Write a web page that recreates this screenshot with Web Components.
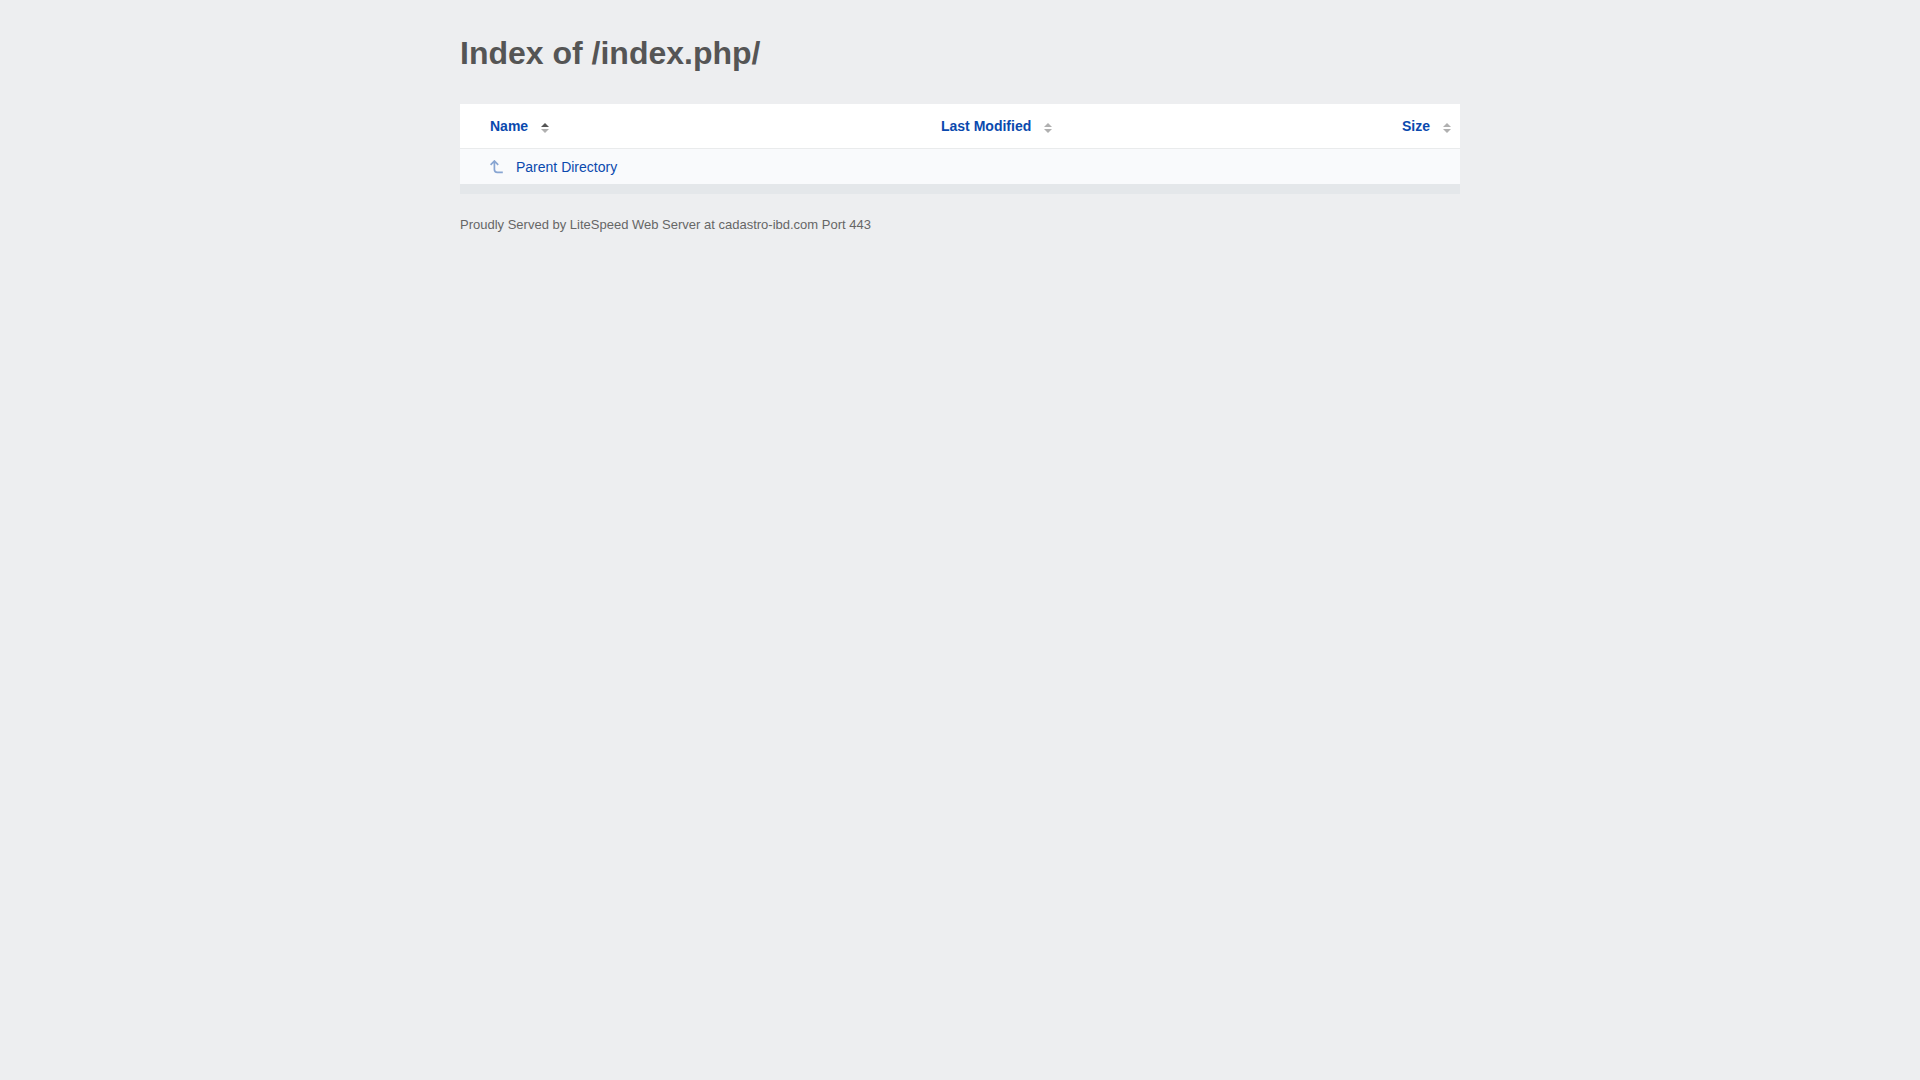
<!DOCTYPE html>
<html lang="en">
<head>
<meta charset="utf-8">
<meta name="viewport" content="width=device-width, initial-scale=1">
<title>Index of /index.php/</title>
<style>
    body {
        margin: 0;
        background-color: #edeef0;
        color: #555;
        font-family: "Liberation Sans", Arial, sans-serif;
        font-size: 14px;
        line-height: 20px;
    }
</style>
</head>
<body>
<index-page>
    <span slot="title">Index of /index.php/</span>
    <directory-listing></directory-listing>
    <span slot="footer">Proudly Served by LiteSpeed Web Server at cadastro-ibd.com Port 443</span>
</index-page>

<template id="page-template">
<style>
    :host {
        display: block;
        max-width: 1000px;
        margin: 0 auto;
        padding: 33px 20px;
    }

    h1 {
        margin: 0 0 31px;
        font-size: 32px;
        line-height: 40px;
    }

    footer {
        margin-top: 21px;
        color: #666;
        font-size: 13px;
    }
</style>
<main>
    <h1><slot name="title"></slot></h1>
    <slot></slot>
</main>
<footer><slot name="footer"></slot></footer>
</template>

<template id="listing-template">
<style>
    :host {
        display: block;
    }

    table {
        width: 100%;
        table-layout: fixed;
        border-collapse: separate;
        border-spacing: 0;
        border-bottom: 10px solid #e4e7ea;
        background-color: #fff;
    }

    .name {
        width: 45%;
        padding-left: 30px;
    }

    .modified {
        width: 40%;
    }

    th, td {
        box-sizing: border-box;
        padding: 0;
        text-align: left;
    }

    th {
        height: 45px;
        border-bottom: 1px solid #e9ebec;
    }

    th.modified {
        padding-left: 31px;
    }

    th.size {
        padding-right: 9px;
        text-align: right;
    }

    td {
        height: 35px;
        padding-top: 1px;
        background-color: #f9fafc;
    }

    a {
        display: flex;
        align-items: center;
        gap: 12px;
        width: fit-content;
        color: #0a49ae;
        text-decoration: none;
    }

    a:hover {
        text-decoration: underline;
    }

    .up {
        width: 14px;
        height: 14px;
        fill: none;
        stroke: #88a5d2;
        stroke-width: 1.7;
    }
</style>
<table>
    <thead><tr></tr></thead>
    <tbody>
        <tr>
            <td class="name">
                <a href="../">
                    <svg class="up" viewBox="0 0 14 14" aria-hidden="true"><path d="M.6 4.8 4.4 1 8.2 4.8M4.4 1.3V9.5Q4.4 12.3 7.4 12.3H12.8"/></svg>
                    Parent Directory
                </a>
            </td>
            <td class="modified"></td>
            <td class="size"></td>
        </tr>
    </tbody>
</table>
</template>

<template id="sort-template">
<style>
    :host {
        display: inline-block;
        vertical-align: top;
    }

    a {
        display: flex;
        align-items: center;
        gap: 13px;
        color: #0a49ae;
        font-weight: bold;
        text-decoration: none;
    }

    svg {
        width: 8px;
        height: 10px;
        margin-top: 4px;
        fill: #b0b0b0;
    }

    :host([sorted]) .asc {
        fill: #555;
    }
</style>
<a href="#">
    <slot></slot>
    <svg viewBox="0 0 8 10" aria-hidden="true">
        <path class="asc" d="M0 4 4 0 8 4Z"/>
        <path d="M0 6H8L4 10Z"/>
    </svg>
</a>
</template>

<script>
class SortLink extends HTMLElement {
    constructor() {
        super();
        const shadowRoot = this.attachShadow({mode: "open"});
        shadowRoot.appendChild(document.getElementById('sort-template').content.cloneNode(true));
    }
}

class DirectoryListing extends HTMLElement {
    constructor() {
        super();
        const shadowRoot = this.attachShadow({mode: "open"});
        shadowRoot.appendChild(document.getElementById('listing-template').content.cloneNode(true));
        //Columns
        this.columns = [
            {id: 'name', label: 'Name', sorted: true},
            {id: 'modified', label: 'Last Modified'},
            {id: 'size', label: 'Size'},
        ]

        this.headerRow = shadowRoot.querySelector('thead tr')
        this.columns.forEach((column) => {
            const th = document.createElement('th')
            th.scope = 'col'
            th.classList.add(column.id)
            const link = document.createElement('sort-link')
            link.textContent = column.label
            link.toggleAttribute('sorted', Boolean(column.sorted))
            th.appendChild(link)
            this.headerRow.appendChild(th)
        })
    }
}

class IndexPage extends HTMLElement {
    constructor() {
        super();
        const shadowRoot = this.attachShadow({mode: "open"});
        shadowRoot.appendChild(document.getElementById('page-template').content.cloneNode(true));
    }
}

//Register
window.customElements.define('sort-link', SortLink)
window.customElements.define('directory-listing', DirectoryListing)
window.customElements.define('index-page', IndexPage)
</script>
</body>
</html>
